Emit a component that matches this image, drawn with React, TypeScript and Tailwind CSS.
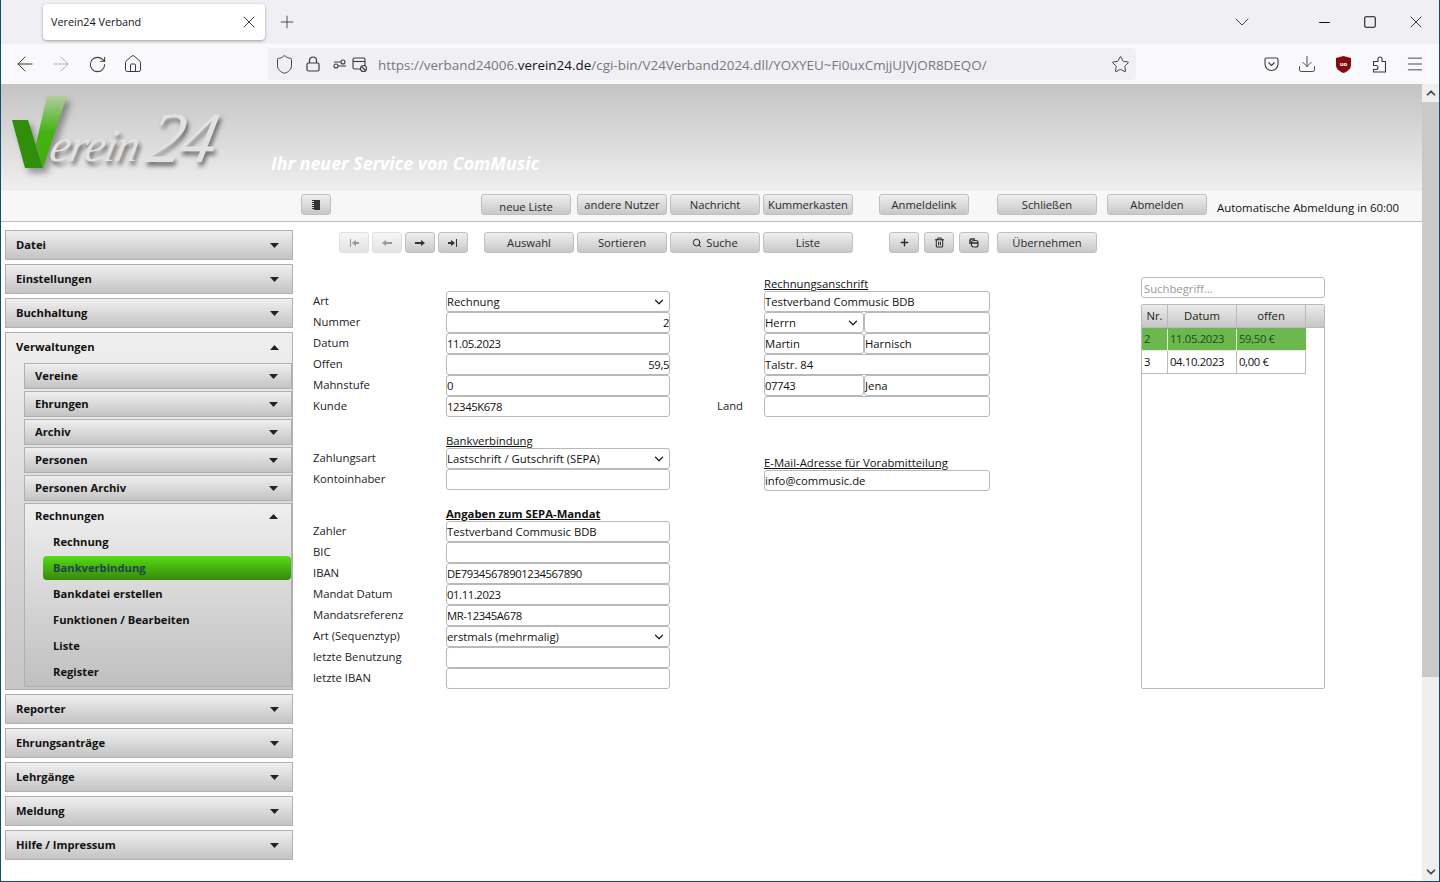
import React from "react";
import { ArrowLeft, ArrowRight, RotateCw, Home, Shield, Star, Download, Menu, X, Plus, ChevronDown, Minus, Square, Search, Trash2, ChevronUp } from "lucide-react";

const Tri = ({ up }: { up?: boolean }) => (
  <svg width="9" height="5" viewBox="0 0 9 5" className="shrink-0">
    <path d={up ? "M0 5 L4.5 0 L9 5Z" : "M0 0 L9 0 L4.5 5Z"} fill="#222" />
  </svg>
);

const Btn = ({ children, w, dis, pt }: { children: React.ReactNode; w: string; dis?: boolean; pt?: boolean }) => (
  <button className={`${w} h-[21px] flex items-center justify-center rounded-[3px] border border-[#c0c0c0] bg-gradient-to-b from-[#efefef] to-[#c8c8c8] text-[11.2px] ${dis ? "opacity-50" : ""} ${pt ? "pt-[5px]" : "pt-[2px]"} text-[#2a2a2a]`}>
    {children}
  </button>
);

const Glyph = ({ d }: { d: string }) => (
  <svg width="12" height="10" viewBox="0 0 12 10" className="-mt-[2px]">
    <path d={d} fill="#333" />
  </svg>
);

const Acc = ({ label, sub, up }: { label: string; sub?: boolean; up?: boolean }) => (
  <div className={`flex items-center justify-between border border-[#b0b0b0] pt-[1px] pl-[10px] pr-[13px] font-bold text-[11.2px] text-[#111] bg-gradient-to-b from-[#efefef] to-[#c4c4c4] ${sub ? "h-[26px]" : "h-[30px]"}`}>
    <span>{label}</span>
    <Tri up={up} />
  </div>
);

const SubItem = ({ label, active }: { label: string; active?: boolean }) => (
  <div className={`h-[24px] flex items-center pl-[10px] text-[11.2px] font-bold rounded-[4px] ${active ? "bg-gradient-to-b from-[#57dc16] to-[#36890a] text-[#22424f]" : "text-[#111]"}`}>
    {label}
  </div>
);

const Side = () => (
  <aside className="w-[288px] ml-[4px] mt-[8px] flex flex-col gap-[4px] shrink-0">
    <Acc label="Datei" />
    <Acc label="Einstellungen" />
    <Acc label="Buchhaltung" />
    <div className="h-[358px] border border-[#b0b0b0] bg-gradient-to-b from-[#efefef] to-[#c6c6c6] flex flex-col">
      <div className="h-[30px] shrink-0 flex items-center justify-between pb-[1px] pl-[10px] pr-[13px] font-bold text-[11.2px] text-[#111]">
        <span>Verwaltungen</span>
        <Tri up />
      </div>
      <div className="ml-[18px] flex flex-col gap-[2px]">
        <Acc label="Vereine" sub />
        <Acc label="Ehrungen" sub />
        <Acc label="Archiv" sub />
        <Acc label="Personen" sub />
        <Acc label="Personen Archiv" sub />
        <div className="h-[184px] border border-[#b0b0b0] bg-gradient-to-b from-[#efefef] to-[#c0c0c0] flex flex-col">
          <div className="h-[26px] shrink-0 flex items-center justify-between pb-[2px] pl-[10px] pr-[13px] font-bold text-[11.2px] text-[#111]">
            <span>Rechnungen</span>
            <Tri up />
          </div>
          <div className="ml-[18px] flex flex-col gap-[2px]">
            <SubItem label="Rechnung" />
            <SubItem label="Bankverbindung" active />
            <SubItem label="Bankdatei erstellen" />
            <SubItem label="Funktionen / Bearbeiten" />
            <SubItem label="Liste" />
            <SubItem label="Register" />
          </div>
        </div>
      </div>
    </div>
    <Acc label="Reporter" />
    <Acc label="Ehrungsanträge" />
    <Acc label="Lehrgänge" />
    <Acc label="Meldung" />
    <Acc label="Hilfe / Impressum" />
  </aside>
);

const Field = ({ v, w = "w-[224px]", right, select, num }: { v?: string; w?: string; right?: boolean; select?: boolean; num?: boolean }) => (
  <div className={`h-[21px] border border-[#b9b9b9] rounded-[3px] bg-white text-[11.3px] text-[#111] flex items-center overflow-hidden ${w} shrink-0 ${right ? "justify-end" : ""} ${select ? "justify-between pr-[3px]" : ""} ${num ? "tracking-[-0.4px]" : ""}`}>
    <span className="pt-[2px]">{v}</span>
    {select && <ChevronDown size={14} strokeWidth={2.2} className="text-[#222]" />}
  </div>
);

const Row = ({ label, children }: { label: string; children: React.ReactNode }) => (
  <div className="flex h-[21px] items-center">
    <span className="w-[133px] shrink-0 text-[11.3px] text-[#222]">{label}</span>
    {children}
  </div>
);

const Head = ({ children, bold }: { children: React.ReactNode; bold?: boolean }) => (
  <div className={`h-[15px] ml-[133px] text-[11.3px] text-[#111] underline leading-[15px] whitespace-nowrap ${bold ? "font-bold text-[11.1px]" : ""}`}>{children}</div>
);

const Form = () => (
  <div className="flex items-start">
    <div className="w-[357px] shrink-0 pt-[17px]">
      <Row label="Art"><Field v="Rechnung" select /></Row>
      <Row label="Nummer"><Field v="2" right num /></Row>
      <Row label="Datum"><Field v="11.05.2023" num /></Row>
      <Row label="Offen"><Field v="59,5" right num /></Row>
      <Row label="Mahnstufe"><Field v="0" /></Row>
      <Row label="Kunde"><Field v="12345K678" num /></Row>
      <div className="mt-[16px]"><Head>Bankverbindung</Head></div>
      <Row label="Zahlungsart"><Field v="Lastschrift / Gutschrift (SEPA)" select /></Row>
      <Row label="Kontoinhaber"><Field /></Row>
      <div className="mt-[16px]"><Head bold>Angaben zum SEPA-Mandat</Head></div>
      <Row label="Zahler"><Field v="Testverband Commusic BDB" /></Row>
      <Row label="BIC"><Field /></Row>
      <Row label="IBAN"><Field v="DE79345678901234567890" num /></Row>
      <Row label="Mandat Datum"><Field v="01.11.2023" num /></Row>
      <Row label="Mandatsreferenz"><Field v="MR-12345A678" num /></Row>
      <Row label="Art (Sequenztyp)"><Field v="erstmals (mehrmalig)" select /></Row>
      <Row label="letzte Benutzung"><Field /></Row>
      <Row label="letzte IBAN"><Field /></Row>
    </div>
    <div className="w-[471px] shrink-0 pl-[47px]">
      <div className="h-[17px] ml-[47px] pt-[2px] text-[11.3px] text-[#111] underline leading-[15px]">Rechnungsanschrift</div>
      <div className="ml-[47px] w-[226px]">
        <Field v="Testverband Commusic BDB" w="w-[226px]" />
        <div className="flex">
          <Field v="Herrn" w="w-[100px]" select />
          <Field w="w-[126px]" />
        </div>
        <div className="flex">
          <Field v="Martin" w="w-[100px]" />
          <Field v="Harnisch" w="w-[126px]" />
        </div>
        <Field v="Talstr. 84" w="w-[226px]" />
        <div className="flex">
          <Field v="07743" w="w-[100px]" num />
          <Field v="Jena" w="w-[126px]" />
        </div>
      </div>
      <div className="flex items-center h-[21px]">
        <span className="w-[47px] text-[11.3px] text-[#222]">Land</span>
        <Field w="w-[226px]" />
      </div>
      <div className="ml-[47px] mt-[38px] h-[15px] text-[11.3px] text-[#111] underline leading-[15px] whitespace-nowrap">E-Mail-Adresse für Vorabmitteilung</div>
      <div className="ml-[47px]"><Field v="info@commusic.de" w="w-[226px]" /></div>
    </div>
    <div className="w-[184px] shrink-0 flex flex-col mt-[3px]">
      <div className="h-[21px] border border-[#b9b9b9] rounded-[3px] bg-white text-[11.3px] text-[#9a9a9a] flex items-center pl-[2px] pt-[3px]">Suchbegriff...</div>
      <div className="mt-[6px] h-[385px] border border-[#b9b9b9] rounded-[2px] bg-white flex flex-col">
        <div className="flex h-[23px] border-b border-[#b9b9b9] bg-gradient-to-b from-[#ececec] to-[#c6c6c6] text-[11.3px] text-[#222]">
          <div className="w-[26px] border-r border-[#b9b9b9] flex items-center justify-center">Nr.</div>
          <div className="w-[69px] border-r border-[#b9b9b9] flex items-center justify-center">Datum</div>
          <div className="w-[69px] border-r border-[#b9b9b9] flex items-center justify-center">offen</div>
        </div>
        <div className="flex h-[23px] w-[164px] pt-[1px] bg-[#6cb84f] border-b border-[#e4f0de] text-[11.3px] text-[#1d4a20] tracking-[-0.35px]">
          <div className="w-[26px] border-r border-[#dfeeda] pl-[2px] flex items-center">2</div>
          <div className="w-[69px] border-r border-[#dfeeda] pl-[2px] flex items-center">11.05.2023</div>
          <div className="w-[69px] pl-[2px] flex items-center">59,50 €</div>
        </div>
        <div className="flex h-[23px] w-[164px] border-b border-r border-[#b9b9b9] text-[11.3px] text-[#111] tracking-[-0.35px]">
          <div className="w-[26px] border-r border-[#b9b9b9] pl-[2px] flex items-center">3</div>
          <div className="w-[69px] border-r border-[#b9b9b9] pl-[2px] flex items-center">04.10.2023</div>
          <div className="pl-[2px] flex items-center">0,00 €</div>
        </div>
      </div>
    </div>
  </div>
);

const Logo = () => (
  <div className="relative w-[270px] h-[106px] shrink-0">
    <svg width="70" height="90" viewBox="0 0 70 90" className="absolute left-[8px] top-[8px]" style={{ filter: "drop-shadow(4px 5px 3px rgba(0,0,0,.35))" }}>
      <defs>
        <linearGradient id="vr" x1="0" y1="1" x2="0" y2="0">
          <stop offset="0" stopColor="#3fae0a" />
          <stop offset="0.5" stopColor="#45b212" />
          <stop offset="1" stopColor="#b0cca0" />
        </linearGradient>
      </defs>
      <path d="M3 28 L19 28 L34 76 L16 76 Z" fill="#2f8f0a" />
      <path d="M38 4 L58 4 L34 76 L27 52 Z" fill="url(#vr)" />
    </svg>
    <span className="absolute left-[50px] top-[37px] -skew-x-12 text-[46px] leading-[50px] text-[#e2e2e2] italic tracking-[-1px] whitespace-nowrap" style={{ fontFamily: '"Liberation Serif", serif', textShadow: "3px 4px 4px rgba(0,0,0,.55)" }}>
      erein
    </span>
    <span className="absolute left-[148px] top-[14px] -skew-x-12 text-[72px] leading-[80px] text-[#e2e2e2] italic tracking-[-3px] whitespace-nowrap" style={{ fontFamily: '"Liberation Serif", serif', textShadow: "3px 4px 4px rgba(0,0,0,.5)" }}>
      24
    </span>
  </div>
);

const NavBox = ({ children }: { children: React.ReactNode }) => <div className="w-[36px] flex items-center justify-center shrink-0">{children}</div>;

export default function App() {
  return (
    <div className="w-[1440px] h-[882px] overflow-hidden flex flex-col bg-white" style={{ fontFamily: '"Open Sans","Noto Sans",sans-serif' }}>
      {/* tab bar */}
      <div className="h-[44px] bg-[#f0f0f4] flex items-center border-l border-r border-[#0f4c75] shrink-0">
        <div className="ml-[42px] w-[222px] h-[36px] mt-[-1px] bg-white rounded-[4px] shadow-[0_1px_3px_rgba(0,0,0,.35)] flex items-center justify-between pl-[8px] pr-[6px] text-[10.8px] text-[#15141a]">
          <span className="pt-[2px]">Verein24 Verband</span>
          <X size={20} strokeWidth={1} />
        </div>
        <Plus size={20} strokeWidth={1} className="ml-[12px] text-[#333]" />
        <div className="flex-1" />
        <ChevronDown size={24} strokeWidth={1} className="text-[#444] mr-[62px]" />
        <Minus size={17} strokeWidth={1.4} className="text-[#111] mr-[30px]" />
        <Square size={14} strokeWidth={1.8} className="text-[#111] mr-[29px]" />
        <X size={20} strokeWidth={1} className="text-[#111] mr-[13px]" />
      </div>
      {/* nav bar */}
      <div className="h-[40px] bg-[#f9f9fb] flex items-center border-l border-r border-[#0f4c75] shrink-0 text-[#3a3a44]">
        <div className="ml-[6px] flex">
          <NavBox><ArrowLeft size={24} strokeWidth={1} /></NavBox>
          <NavBox><ArrowRight size={24} strokeWidth={1} className="text-[#b5b5bb]" /></NavBox>
          <NavBox><RotateCw size={19} strokeWidth={1.3} /></NavBox>
          <NavBox><Home size={20} strokeWidth={1.2} /></NavBox>
        </div>
        <div className="w-[868px] ml-[117px] h-[32px] rounded-[4px] bg-[#f0f0f4] flex items-center pl-[6px] pr-[6px]">
          <Shield size={21} strokeWidth={1.1} />
          <svg width="14" height="16" viewBox="0 0 14 16" className="ml-[11px]" fill="none" stroke="#3a3a44" strokeWidth="1.2">
            <rect x="1" y="7" width="12" height="8" rx="1.5" />
            <path d="M3.5 7V4.5a3.5 3.5 0 0 1 7 0V7" />
          </svg>
          <svg width="36" height="15" viewBox="0 0 36 15" className="ml-[13px]" fill="none" stroke="#3a3a44" strokeWidth="1.1">
            <circle cx="3" cy="9" r="2" />
            <path d="M5 9H13M1 5H8" />
            <circle cx="10" cy="5" r="2" />
            <rect x="20" y="1" width="12" height="11" rx="1.5" />
            <path d="M20 4.5H32" />
            <circle cx="30.5" cy="11.5" r="3" fill="#f0f0f4" />
            <path d="M28.500 9.500L32.500 13.500" />
          </svg>
          <span className="ml-[9px] pt-[3px] text-[13.45px] text-[#77777f] whitespace-nowrap">
            https://verband24006.<span className="text-[#15141a]">verein24.de</span>/cgi-bin/V24Verband2024.dll/YOXYEU~Fi0uxCmjjUJVjOR8DEQO/
          </span>
          <div className="flex-1" />
          <Star size={19} strokeWidth={1.2} />
        </div>
        <div className="flex-1" />
        <div className="flex mr-[6px]">
          <NavBox>
            <svg width="15" height="15" viewBox="0 0 15 15" fill="none" stroke="#3a3a44" strokeWidth="1.1">
              <path d="M1 2.5a1.5 1.5 0 0 1 1.5-1.5h10A1.5 1.5 0 0 1 14 2.5V7a6.5 6.5 0 0 1-13 0Z" />
              <path d="M4.5 5.5L7.5 8.5L10.5 5.5" />
            </svg>
          </NavBox>
          <NavBox><Download size={20} strokeWidth={1.1} /></NavBox>
          <NavBox>
            <svg width="15" height="17" viewBox="0 0 15 17">
              <path d="M7.5 0L15 2v7c0 4-3.5 6.5-7.5 8C3.500 15.500 0 13 0 9V2Z" fill="#800b10" />
              <text x="7.5" y="10" textAnchor="middle" fontSize="6" fontWeight="700" fill="#fff">uo</text>
            </svg>
          </NavBox>
          <NavBox>
            <svg width="15" height="17" viewBox="0 0 15 17" fill="none" stroke="#3a3a44" strokeWidth="1.1">
              <path d="M1.500 5.500H6V3a2 2 0 0 1 4 0v2.500H13.500V16H1.500V13.500H4a2 2 0 0 0 0-4H1.500Z" />
            </svg>
          </NavBox>
          <NavBox><Menu size={20} strokeWidth={1.1} /></NavBox>
        </div>
      </div>
      {/* page */}
      <div className="flex-1 flex border-l border-r border-b border-[#0f4c75] min-h-0">
        <div className="flex-1 flex flex-col min-w-0">
          <div className="h-[107px] shrink-0 bg-gradient-to-b from-[#c4c4c4] to-[#efefef] flex">
            <Logo />
            <div className="pt-[66px] text-[17.85px] font-bold italic text-white whitespace-nowrap">Ihr neuer Service von ComMusic</div>
          </div>
          <div className="h-[31px] shrink-0 bg-[#f7f7f7] border-b border-[#bdbdbd] flex items-start pt-[3px]">
            <div className="ml-[300px]">
              <Btn w="w-[30px]">
                <svg width="8" height="10" viewBox="0 0 8 10" className="-mt-[2px]"><path d="M2 0H8V10H2V9H0V8H2V7H0V6H2V5H0V4H2V3H0V2H2V1H0V0Z" fill="#333" /></svg>
              </Btn>
            </div>
            <div className="ml-[150px] flex gap-[3px]">
              <div className="mr-[3px]"><Btn w="w-[90px]" pt>neue Liste</Btn></div>
              <Btn w="w-[90px]">andere Nutzer</Btn>
              <Btn w="w-[90px]">Nachricht</Btn>
              <Btn w="w-[90px]">Kummerkasten</Btn>
            </div>
            <div className="ml-[26px]"><Btn w="w-[90px]">Anmeldelink</Btn></div>
            <div className="ml-[28px]"><Btn w="w-[100px]">Schließen</Btn></div>
            <div className="ml-[10px]"><Btn w="w-[100px]">Abmelden</Btn></div>
            <span className="ml-[10px] pt-[5px] text-[11.4px] text-[#111] whitespace-nowrap">Automatische Abmeldung in 60:00</span>
          </div>
          <div className="flex-1 flex min-h-0">
            <Side />
            <div className="ml-[20px] flex flex-col pt-[10px]">
              <div className="flex h-[21px] ml-[26px]">
                <div className="flex gap-[3px]">
                  <Btn w="w-[30px]" dis><Glyph d="M2 1H3V9H2ZM4 5L8 2V4H11V6H8V8Z" /></Btn>
                  <Btn w="w-[30px]" dis><Glyph d="M1 5L5 2V4H11V6H5V8Z" /></Btn>
                  <Btn w="w-[30px]"><Glyph d="M11 5L7 2V4H1V6H7V8Z" /></Btn>
                  <Btn w="w-[30px]"><Glyph d="M10 1H9V9H10ZM8 5L4 2V4H1V6H4V8Z" /></Btn>
                </div>
                <div className="ml-[16px] flex gap-[3px]">
                  <Btn w="w-[90px]">Auswahl</Btn>
                  <Btn w="w-[90px]">Sortieren</Btn>
                  <Btn w="w-[90px]"><Search size={10} strokeWidth={2.4} className="mr-[4px] -mt-[2px]" />Suche</Btn>
                  <Btn w="w-[90px]">Liste</Btn>
                </div>
                <div className="ml-[36px] flex gap-[5px]">
                  <Btn w="w-[30px]"><Plus size={11} strokeWidth={3} className="-mt-[2px]" /></Btn>
                  <Btn w="w-[30px]"><Trash2 size={11} strokeWidth={2.2} className="-mt-[2px]" /></Btn>
                  <Btn w="w-[30px]">
                    <svg width="10" height="10" viewBox="0 0 10 10" className="-mt-[2px]" fill="none" stroke="#333" strokeWidth="1.2">
                      <path d="M1 6V2.500A1.500 1.500 0 0 1 2.500 1H6" strokeWidth="1.600" />
                      <rect x="2.500" y="2.500" width="6.500" height="6.500" rx="2" fill="#ddd" />
                      <path d="M2.500 5H9" stroke="#333" strokeWidth="1.6" />
                    </svg>
                  </Btn>
                </div>
                <div className="ml-[8px]"><Btn w="w-[100px]">Übernehmen</Btn></div>
              </div>
              <div className="mt-[21px]"><Form /></div>
            </div>
          </div>
        </div>
        <div className="w-[17px] shrink-0 bg-[#efefef] flex flex-col items-center">
          <div className="h-[18px] flex items-center shrink-0"><ChevronUp size={14} strokeWidth={3} className="text-[#444]" /></div>
          <div className="w-full h-[575px] bg-[#c9c9c9]" />
          <div className="flex-1" />
          <div className="h-[18px] flex items-center shrink-0"><ChevronDown size={14} strokeWidth={3} className="text-[#444]" /></div>
        </div>
      </div>
    </div>
  );
}
